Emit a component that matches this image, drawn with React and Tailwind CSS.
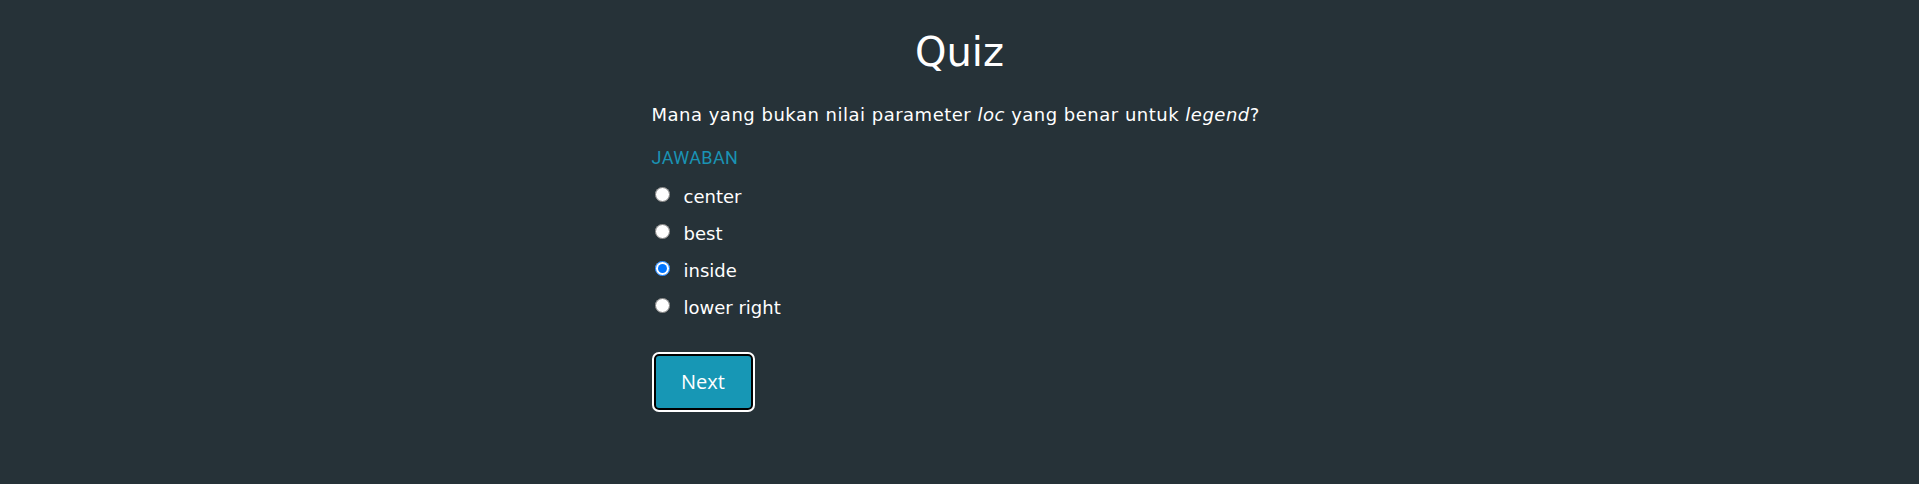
import React, { useState } from "react";

const options = ["center", "best", "inside", "lower right"];

const App = () => {
    const [answer, setAnswer] = useState("inside");

    return (
        <div className="min-h-[484px] w-full bg-[#263238] text-white font-['DejaVu_Sans',sans-serif]">
            <div className="w-[616px] mx-auto pt-[26px]">
                <h1 className="text-center text-[40px] leading-[52px]">Quiz</h1>
                <p className="mt-[24px] text-[18px] leading-[26px] tracking-[0.5px]">
                    Mana yang bukan nilai parameter <i>loc</i> yang benar untuk <i>legend</i>?
                </p>
                <div className="mt-[18px] text-[18px] leading-[23px] tracking-[0.4px] text-[#1a93b4] font-['Roboto',sans-serif]">
                    JAWABAN
                </div>
                <div className="mt-[17px] flex flex-col gap-[16px]">
                    {options.map((opt) => (
                        <label key={opt} className="flex items-center h-[21px] text-[18px] cursor-pointer">
                            <input
                                type="radio"
                                name="answer"
                                className="w-[15px] h-[15px] ml-[3px] mr-[14px] mt-[-4px]"
                                checked={answer === opt}
                                onChange={() => setAnswer(opt)}
                            />
                            {opt}
                        </label>
                    ))}
                </div>
                <button className="mt-[36px] ml-[2px] w-[99px] h-[56px] rounded-[5px] border-2 border-black bg-[#1797b5] text-[20px] outline-2 outline-white font-['Open_Sans',sans-serif]">
                    Next
                </button>
            </div>
        </div>
    );
};

export default App;
